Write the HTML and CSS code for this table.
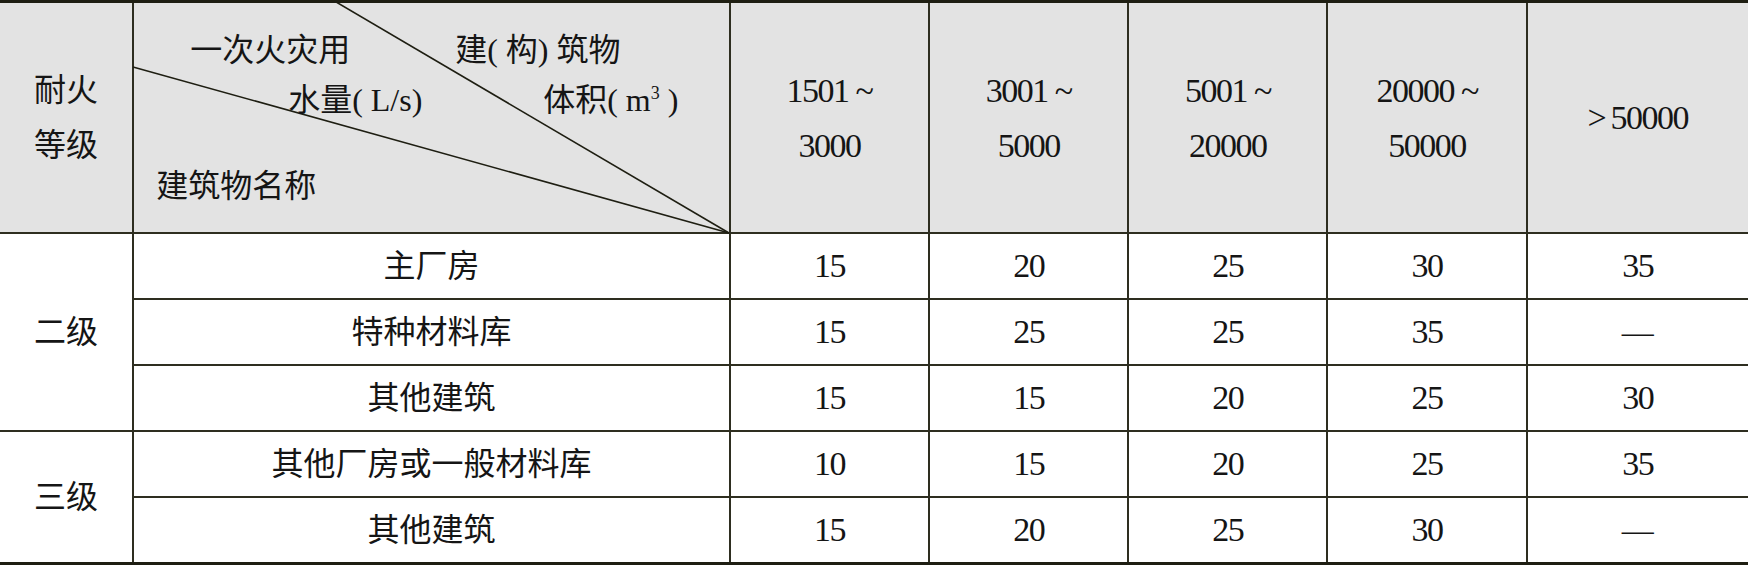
FILE: index.html
```html
<!DOCTYPE html>
<html lang="zh-CN">
<head>
    <meta charset="utf-8">
    <title>一次火灾用水量</title>
    <link rel="stylesheet" href="styles.css">
</head>
<body>
    <table class="water-table">
        <colgroup>
            <col class="col-grade">
            <col class="col-name">
            <col class="col-vol">
            <col class="col-vol">
            <col class="col-vol">
            <col class="col-vol">
            <col class="col-last">
        </colgroup>
        <thead>
            <tr class="head-row">
                <th class="grade">耐火<br>等级</th>
                <th class="diag">
                    <div class="diag-box">
                        <svg class="diag-lines" width="594" height="229">
                            <line x1="197" y1="-4" x2="595" y2="230" />
                            <line x1="-1" y1="64" x2="595" y2="230" />
                        </svg>
                        <span class="label label-a">一次火灾用</span>
                        <span class="label label-b">建( 构) 筑物</span>
                        <span class="label label-c">水量( L/s)</span>
                        <span class="label label-d">体积( m<sup>3</sup> )</span>
                        <span class="label label-e">建筑物名称</span>
                    </div>
                </th>
                <th class="num">1501 ~<br>3000</th>
                <th class="num">3001 ~<br>5000</th>
                <th class="num">5001 ~<br>20000</th>
                <th class="num">20000 ~<br>50000</th>
                <th class="num">&gt;&thinsp;50000</th>
            </tr>
        </thead>
        <tbody>
            <tr>
                <td class="grade" rowspan="3">二级</td>
                <td>主厂房</td>
                <td class="num">15</td><td class="num">20</td><td class="num">25</td><td class="num">30</td><td class="num">35</td>
            </tr>
            <tr>
                <td>特种材料库</td>
                <td class="num">15</td><td class="num">25</td><td class="num">25</td><td class="num">35</td><td>—</td>
            </tr>
            <tr>
                <td>其他建筑</td>
                <td class="num">15</td><td class="num">15</td><td class="num">20</td><td class="num">25</td><td class="num">30</td>
            </tr>
            <tr>
                <td class="grade" rowspan="2">三级</td>
                <td>其他厂房或一般材料库</td>
                <td class="num">10</td><td class="num">15</td><td class="num">20</td><td class="num">25</td><td class="num">35</td>
            </tr>
            <tr>
                <td>其他建筑</td>
                <td class="num">15</td><td class="num">20</td><td class="num">25</td><td class="num">30</td><td>—</td>
            </tr>
        </tbody>
    </table>
</body>
</html>
```

FILE: styles.css
```css
body {
    margin: 0;
    background: #ffffff;
    font-family: "Liberation Serif", "Noto Sans CJK SC", serif;
    color: #151515;
}
.water-table {
    width: 1748px;
    border-collapse: collapse;
    table-layout: fixed;
    border-top: 3px solid #1e1e12;
    border-bottom: 3px solid #1e1e12;
}
.col-grade { width: 133px; }
.col-name { width: 596px; }
.col-vol { width: 199px; }
.col-last { width: 221px; }
th, td {
    border: 2px solid #2e2e20;
    padding: 0;
    text-align: center;
    font-size: 32px;
    font-weight: normal;
}
th:first-child, td.grade {
    border-left: none;
}
th:last-child, td:last-child {
    border-right: none;
}
.head-row th {
    background: #e3e3e3;
    height: 229px;
    line-height: 55px;
}
tbody td {
    height: 64px;
    line-height: 32px;
}
.num {
    font-size: 34px;
    letter-spacing: -1.5px;
}
.diag {
    vertical-align: top;
}
.diag-box {
    position: relative;
    height: 229px;
    text-align: left;
}
.diag-lines {
    position: absolute;
    left: 0;
    top: 0;
    overflow: visible;
}
.diag-lines line {
    stroke: #1e1e12;
    stroke-width: 1.6;
}
.label {
    position: absolute;
    line-height: 32px;
    white-space: nowrap;
}
.label sup {
    font-size: 18px;
    line-height: 0;
}
.label-a { left: 56px; top: 31px; }
.label-b { left: 321px; top: 31px; }
.label-c { left: 154px; top: 81px; }
.label-d { left: 409px; top: 81px; }
.label-e { left: 22px; top: 167px; }
```
